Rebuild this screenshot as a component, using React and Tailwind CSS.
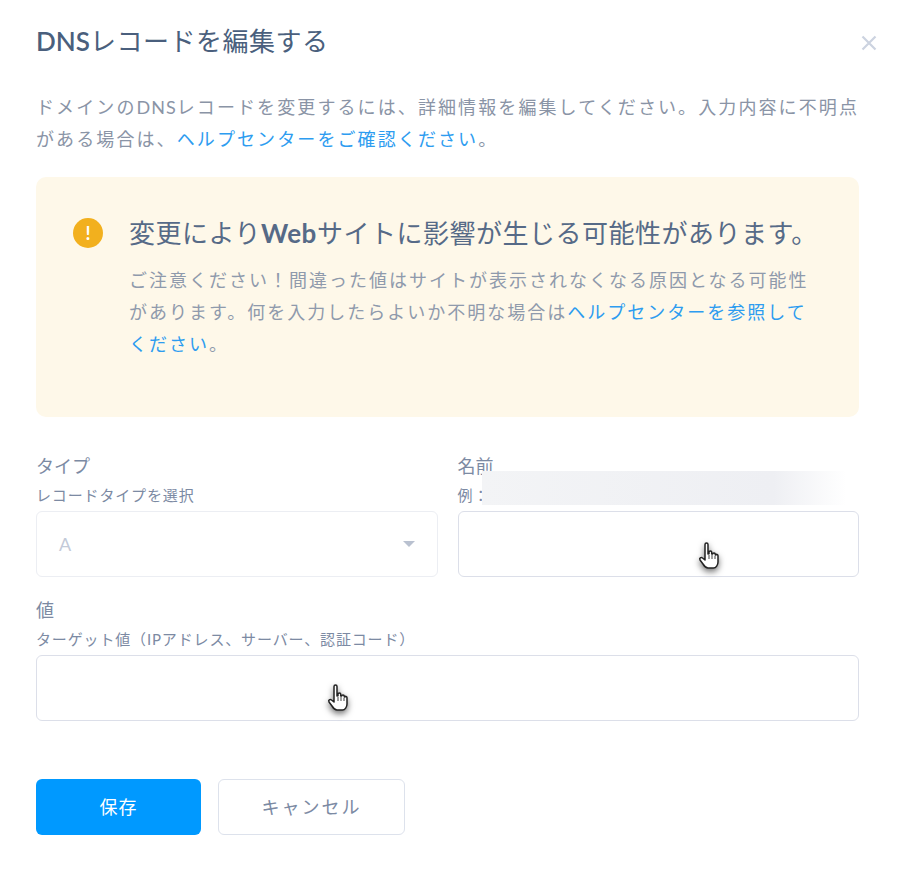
import React from 'react';

const font = { fontFamily: 'Lato, "Noto Sans CJK JP", sans-serif' };

const HandCursor = ({ className }) => (
  <svg viewBox="0 0 24 32" className={`absolute w-[24px] h-[32px] drop-shadow-[0_3px_3px_rgba(0,0,0,0.55)] ${className}`}>
    <path
      d="M8 3.500c0-2 3-2 3 0V13l1-.2V11c0-1.500 2.700-1.500 2.700 0v2l1-.1c.2-1.400 2.500-1.300 2.600.2v1l.7-.1c.3-1 2-.8 2 .8V21c0 3-2 6-4.500 6H11c-2.500 0-3.500-1.500-5-4l-3-4c-1-1.800 1-3.200 2.500-2L8 19V3.500z"
      fill="#fff"
      stroke="#222"
      strokeWidth="1.500"
      strokeLinejoin="round"
    />
    <path d="M12 14v4M15 14v4M18 15v3" stroke="#444" strokeWidth="1" />
  </svg>
);

const Field = ({ label, help, children, className = '' }) => (
  <div className={`relative ${className}`}>
    <div className="text-[18px] leading-[26px] text-[#7c8aa3]">{label}</div>
    <div className="mt-[6px] mb-[6px] text-[15px] leading-[20px] tracking-[0.85px] text-[#7c8aa3] whitespace-nowrap">{help}</div>
    {children}
  </div>
);

export default function App() {
  return (
    <div className="w-[901px] h-[870px] bg-white pl-[36px] pr-[42px] pt-[24px] relative overflow-hidden" style={font}>
      <div className="flex items-center justify-between h-[34px]">
        <h2 className="text-[26px] leading-[34px] tracking-[0.5px] text-[#4a5f7d] whitespace-nowrap">
          <span className="font-semibold tracking-normal">DNS</span>レコードを編集する
        </h2>
        <svg viewBox="0 0 16 16" className="w-[16px] h-[16px] mr-[-18px] mt-[4px]">
          <path d="M1.500 1.500l13 13M14.500 1.500l-13 13" stroke="#ccd3e0" strokeWidth="2.200" />
        </svg>
      </div>

      <p className="mt-[33px] text-[18px] leading-[32px] tracking-[2.1px] text-[#8a94a6] whitespace-nowrap">
        ドメインの<span className="tracking-[1px]">DNS</span>レコードを変更するには、詳細情報を編集してください。入力内容に不明点
        <br />
        がある場合は、<span className="text-[#2d9cf0]">ヘルプセンターをご確認ください</span>。
      </p>

      <div className="mt-[22px] h-[240px] rounded-[10px] bg-[#fef8e9] pl-[37px] pt-[36px] flex gap-[26px]">
        <div className="mt-[5px] w-[30px] h-[30px] shrink-0 rounded-full bg-[#f2b01e] flex items-center justify-center">
          <div className="text-white text-[18px] leading-none font-bold">!</div>
        </div>
        <div>
          <div className="text-[26px] leading-[40px] text-[#566a87] whitespace-nowrap tracking-[0.5px]">
            変更により<span className="font-bold">Web</span>サイトに影響が生じる可能性があります。
          </div>
          <p className="mt-[11px] text-[18px] leading-[32px] tracking-[2px] text-[#8f9aac] whitespace-nowrap">
            ご注意ください！間違った値はサイトが表示されなくなる原因となる可能性
            <br />
            があります。何を入力したらよいか不明な場合は<span className="text-[#2d9cf0]">ヘルプセンターを参照して</span>
            <br />
            <span className="text-[#2d9cf0]">ください</span>。
          </p>
        </div>
      </div>

      <div className="mt-[36px] grid grid-cols-2 gap-x-[20px]">
        <Field label="タイプ" help="レコードタイプを選択">
          <div className="h-[66px] rounded-[6px] border border-[#eceef3] flex items-center justify-between pl-[22px] pr-[22px]">
            <span className="text-[18px] text-[#c3cad8]">A</span>
            <span className="w-0 h-0 border-x-[6px] border-x-transparent border-t-[6px] border-t-[#b9c1d0]" />
          </div>
        </Field>
        <Field label="名前" help="例：">
          <div className="h-[66px] rounded-[6px] border border-[#dcdfe9] bg-white" />
          <div className="absolute left-[24px] top-[18px] w-[364px] h-[34px] bg-gradient-to-r from-[#f3f4f6] via-[#eeeff3] via-80% to-transparent" />
        </Field>
      </div>

      <Field label="値" help="ターゲット値（IPアドレス、サーバー、認証コード）" className="mt-[20px]">
        <div className="h-[66px] rounded-[6px] border border-[#dcdfe9] bg-white" />
      </Field>

      <div className="mt-[58px] flex gap-[17px]">
        <button className="w-[165px] h-[56px] rounded-[6px] bg-[#0099ff] text-white text-[18px] tracking-[1px]">保存</button>
        <button className="w-[187px] h-[56px] rounded-[6px] border border-[#dde2ec] bg-white text-[#7c8aa3] text-[18px] tracking-[2px]">キャンセル</button>
      </div>

      <HandCursor className="left-[697px] top-[541px]" />
      <HandCursor className="left-[326px] top-[683px]" />
    </div>
  );
}
